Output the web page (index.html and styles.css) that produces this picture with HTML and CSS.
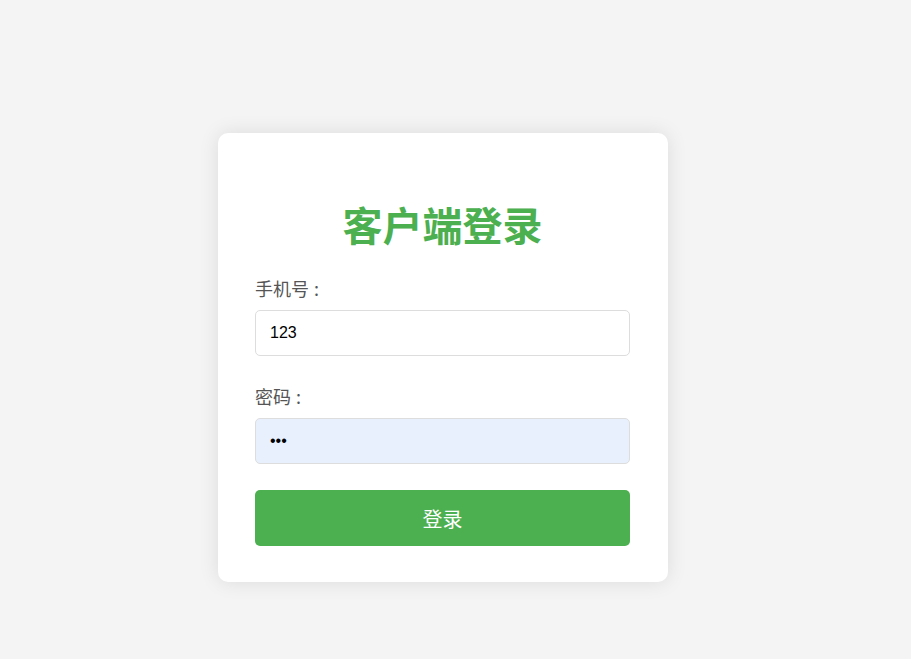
FILE: index.html
```html
<!DOCTYPE html>
<html lang="zh-CN">
<head>
<meta charset="utf-8">
<title>客户端登录</title>
<link rel="stylesheet" href="styles.css">
</head>
<body>
<main class="page">
  <form class="card" onsubmit="return false;">
    <h1 class="title">客户端登录</h1>
    <label class="label" for="phone">手机号<span class="colon">:</span></label>
    <input class="field" id="phone" type="text" value="123">
    <label class="label label-second" for="pwd">密码<span class="colon">:</span></label>
    <input class="field field-filled" id="pwd" type="password" value="123">
    <button class="submit" type="submit">登录</button>
  </form>
</main>
</body>
</html>
```
FILE: styles.css
```css
html, body {
  margin: 0;
  padding: 0;
  background: #f4f4f4;
  height: 100%;
}
body {
  font-family: "Noto Sans CJK SC", "Liberation Sans", sans-serif;
}
.page {
  display: flex;
  align-items: flex-start;
  padding: 133px 0 0 218px;
}
.card {
  width: 450px;
  box-sizing: border-box;
  background: #fff;
  border-radius: 10px;
  box-shadow: 0 0 20px rgba(0, 0, 0, 0.1);
  padding: 37px 38px 36px 37px;
  display: flex;
  flex-direction: column;
}
.title {
  margin: 26px 0 0;
  font-size: 40px;
  line-height: 56px;
  font-weight: 700;
  color: #4caf50;
  text-align: center;
}
.label {
  display: block;
  margin-top: 24px;
  font-size: 18px;
  line-height: 24px;
  color: #555;
}
.colon {
  margin-left: 5px;
}
.label-second {
  margin-top: 28px;
}
.field {
  margin-top: 10px;
  height: 46px;
  box-sizing: border-box;
  width: 100%;
  border: 1px solid #ddd;
  border-radius: 5px;
  padding: 0 14px;
  font-family: "Liberation Sans", Arial, sans-serif;
  font-size: 16px;
  color: #000;
  background: #fff;
  outline: none;
}
.field-filled {
  background: #e8f0fe;
}
.submit {
  margin-top: 26px;
  height: 56px;
  width: 100%;
  border: none;
  border-radius: 5px;
  background: #4caf50;
  color: #fff;
  font-family: "Noto Sans CJK SC", sans-serif;
  font-size: 20px;
  cursor: pointer;
}
```
